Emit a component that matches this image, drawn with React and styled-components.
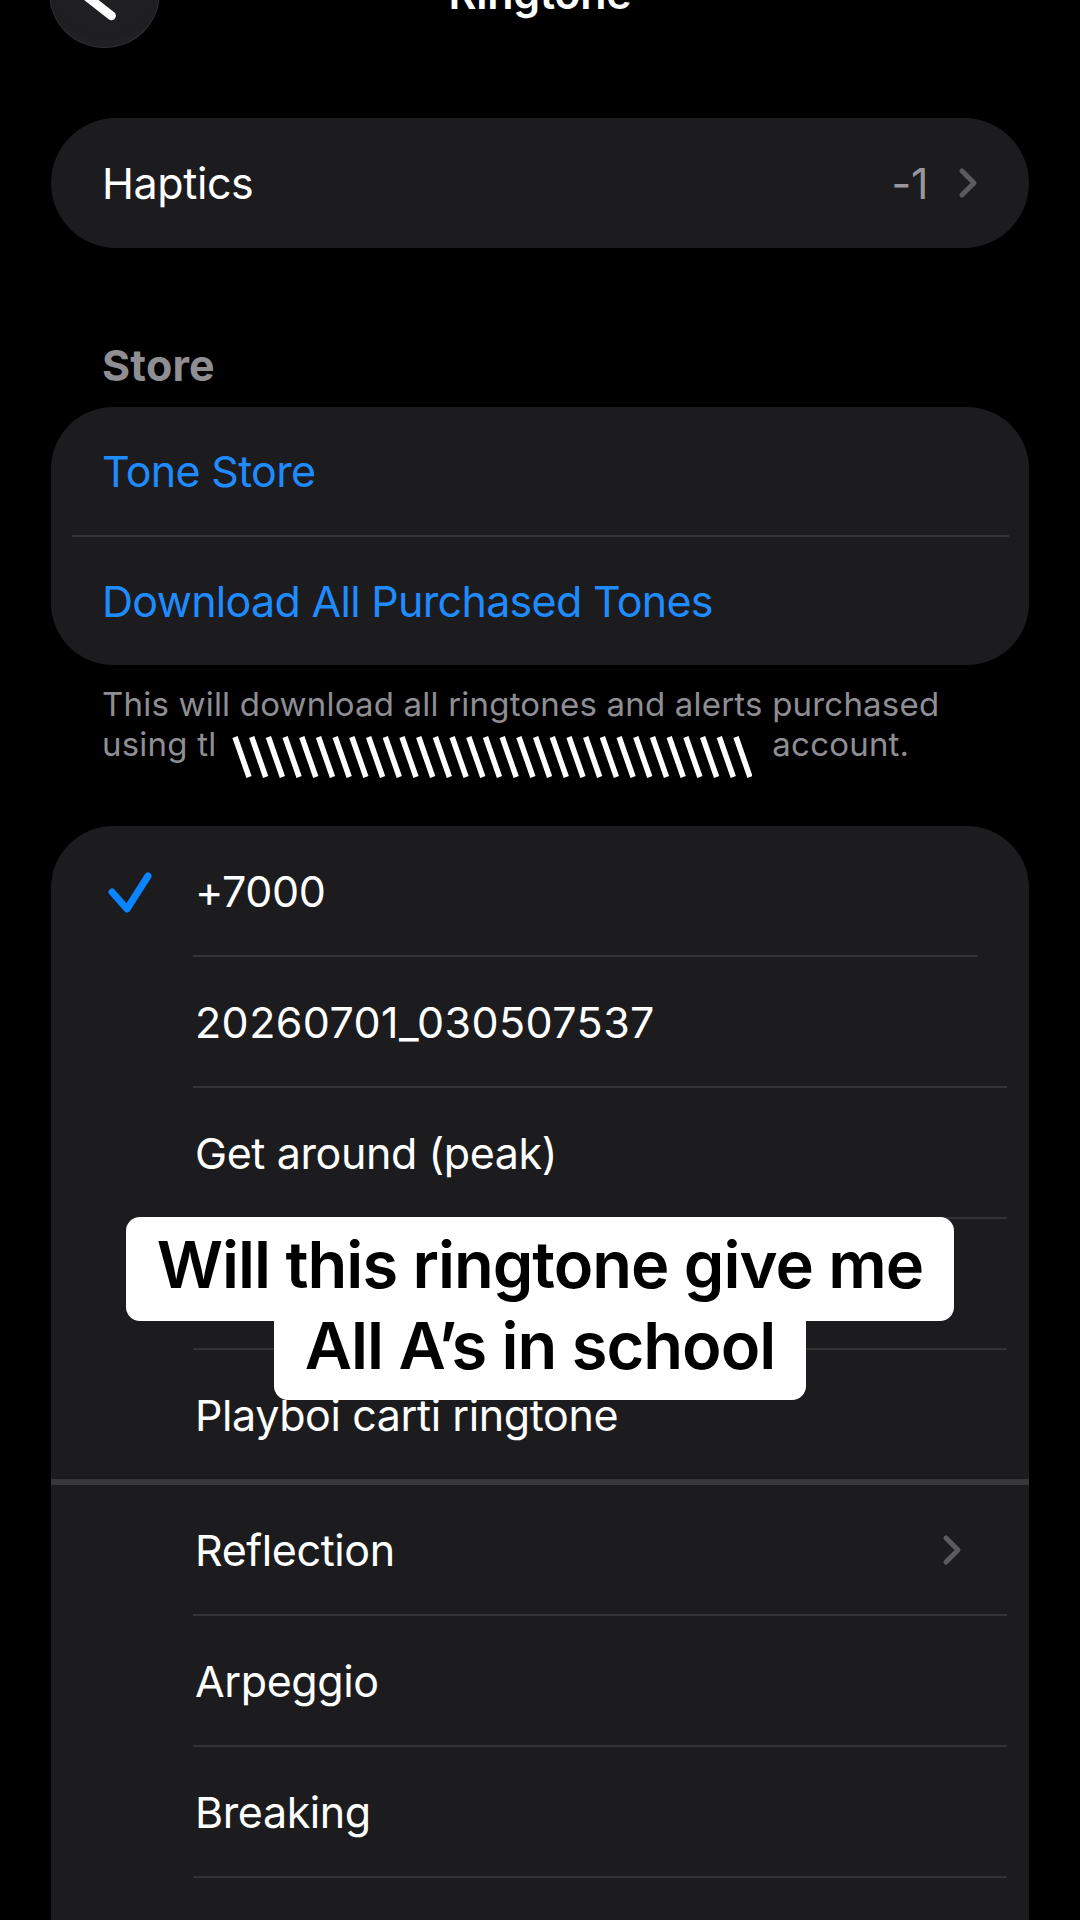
import React from 'react';
import styled, { createGlobalStyle } from 'styled-components';

const GlobalStyle = createGlobalStyle`
  html, body {
    margin: 0;
    padding: 0;
    background: #000;
  }
  body {
    font-family: Inter, "Noto Sans", sans-serif;
    color: #fff;
    -webkit-font-smoothing: antialiased;
    overflow: hidden;
  }
`;

// Whole screen, laid out as a single column
const Page = styled.div`
  position: relative;
  display: flex;
  flex-direction: column;
  width: 1080px;
  height: 1920px;
  padding: 0 51px;
  box-sizing: border-box;
  overflow: hidden;
`;

// Navigation bar, scrolled mostly out of view
const NavBar = styled.header`
  display: grid;
  grid-template-columns: 111px 1fr 111px;
  align-items: center;
  height: 110px;
  margin: -62px -2px 0 -2px;
`;

const BackButton = styled.button`
  width: 111px;
  height: 110px;
  padding: 0;
  border-radius: 50%;
  border: 1px solid rgba(255, 255, 255, 0.07);
  background: radial-gradient(circle at 50% 30%, #232325 0%, #1e1e20 70%, #262628 100%);
  display: flex;
`;

const Title = styled.h1`
  margin: 0;
  text-align: center;
  font-size: 43px;
  font-weight: 600;
  line-height: 1;
  letter-spacing: -0.3px;
`;

const Card = styled.section`
  background: #1c1c1e;
  border-radius: ${(p) => p.$radius || 62}px;
  overflow: hidden;
  margin-top: ${(p) => p.$top || 0}px;
  flex-shrink: 0;
`;

const SettingRow = styled.div`
  display: flex;
  align-items: center;
  height: ${(p) => p.$height || 128}px;
  padding: 0 51px;
  font-size: 43px;
  letter-spacing: ${(p) => (p.$link ? '-0.7px' : '-0.4px')};
  color: ${(p) => (p.$link ? '#1f8bff' : '#fff')};
`;

const Label = styled.span`
  flex: 1;
`;

const Value = styled.span`
  color: #98989e;
  margin-right: 30px;
`;

const Divider = styled.div`
  height: ${(p) => p.$size || 2}px;
  background: ${(p) => p.$color || '#333336'};
  margin: 0 ${(p) => p.$right || 0}px 0 ${(p) => p.$left || 0}px;
`;

const SectionHeader = styled.h2`
  margin: 93px 0 0;
  padding-left: 51px;
  font-size: 43px;
  font-weight: 700;
  line-height: 48px;
  color: #8e8e93;
  letter-spacing: 0.2px;
`;

const Footer = styled.div`
  margin-top: 19px;
  padding: 0 51px;
  font-size: 33px;
  line-height: 40px;
  color: #8e8e93;
  letter-spacing: 0.2px;
`;

const FooterLine = styled.div`
  display: flex;
  align-items: flex-start;
  height: 40px;
  white-space: nowrap;
`;

// Scribbled-out account name
const Redaction = styled.svg`
  flex-shrink: 0;
  margin: 12px 20px 0 16px;
`;

const ToneRow = styled.div`
  display: grid;
  grid-template-columns: 144px 1fr auto;
  align-items: center;
  height: 129px;
  padding-right: 67px;
  font-size: 43px;
  letter-spacing: ${(p) => p.$spacing || -0.4}px;
  color: #fff;
`;

const Lead = styled.div`
  display: flex;
  align-items: center;
  padding-left: 55px;
`;

// Text overlay on top of the list
const Caption = styled.div`
  position: absolute;
  top: 1217px;
  left: 0;
  right: 0;
  display: flex;
  flex-direction: column;
  align-items: center;
  font-family: Inter, "Noto Sans", sans-serif;
  font-weight: 600;
  font-size: 65px;
  line-height: 48px;
  color: #000;
  letter-spacing: -1px;
`;

const CaptionLine = styled.div`
  background: #fff;
  white-space: nowrap;
  padding: ${(p) => p.$pt}px 31px ${(p) => p.$pb}px;
  border-radius: ${(p) => p.$radius};
`;

const Chevron = ({ color = '#5b5b5f' }) => (
  <svg width="20" height="32" viewBox="0 0 20 32">
    <path d="M4 4 L16 16 L4 28" fill="none" stroke={color} strokeWidth="5" strokeLinecap="round" strokeLinejoin="round" />
  </svg>
);

const Check = () => (
  <svg width="46" height="44" viewBox="0 0 46 44">
    <path d="M6 23 L21 40 L42 7" fill="none" stroke="#0a84ff" strokeWidth="7" strokeLinecap="round" strokeLinejoin="round" />
  </svg>
);

// the fourth tone sits under the caption and the last row is below the fold
const tones = [
  { id: 1, name: '+7000', selected: true, sepRight: 51 },
  { id: 2, name: '20260701_030507537', spacing: 0.4 },
  { id: 3, name: 'Get around (peak)' },
  { id: 4, name: '' },
  { id: 5, name: 'Playboi carti ringtone', last: true },
];

const builtIn = [
  { id: 6, name: 'Reflection', chevron: true },
  { id: 7, name: 'Arpeggio' },
  { id: 8, name: 'Breaking' },
  { id: 9, name: '' },
];

export default function App() {
  return (
    <>
      <GlobalStyle />
      <Page>
        <NavBar>
          <BackButton aria-label="Back">
            <svg width="110" height="110" viewBox="0 0 110 110">
              <path d="M62 33 L34 55 L62 77" fill="none" stroke="#fff" strokeWidth="9" strokeLinecap="round" strokeLinejoin="round" />
            </svg>
          </BackButton>
          <Title>Ringtone</Title>
          <div />
        </NavBar>

        <Card $top={70} $radius={65}>
          <SettingRow $height={130}>
            <Label>Haptics</Label>
            <Value>-1</Value>
            <Chevron />
          </SettingRow>
        </Card>

        <SectionHeader>Store</SectionHeader>
        <Card $top={18}>
          <SettingRow $link>Tone Store</SettingRow>
          <Divider $left={21} $right={20} />
          <SettingRow $link>Download All Purchased Tones</SettingRow>
        </Card>
        <Footer>
          <FooterLine>This will download all ringtones and alerts purchased</FooterLine>
          <FooterLine>
            using tl
            <Redaction width="520" height="42" viewBox="0 0 520 42">
              {Array.from({ length: 31 }, (_, i) => (
                <line key={i} x1={3 + i * 16.7} y1="1" x2={17 + i * 16.7} y2="41" stroke="#fff" strokeWidth="5.5" />
              ))}
            </Redaction>
            account.
          </FooterLine>
        </Footer>

        <Card $top={62}>
          {tones.map((t) => (
            <React.Fragment key={t.id}>
              <ToneRow $spacing={t.spacing}>
                <Lead>{t.selected && <Check />}</Lead>
                <span>{t.name}</span>
              </ToneRow>
              {!t.last && <Divider $left={142} $right={t.sepRight || 22} />}
            </React.Fragment>
          ))}
          <Divider $size={6} $color="#38383a" />
          {builtIn.map((t) => (
            <React.Fragment key={t.id}>
              <ToneRow>
                <Lead />
                <span>{t.name}</span>
                {t.chevron && <Chevron />}
              </ToneRow>
              <Divider $left={142} $right={22} />
            </React.Fragment>
          ))}
        </Card>

        <Caption>
          <CaptionLine $pt={24} $pb={32} $radius="14px">Will this ringtone give me</CaptionLine>
          <CaptionLine $pt={1} $pb={30} $radius="0 0 14px 14px">All A’s in school</CaptionLine>
        </Caption>
      </Page>
    </>
  );
}
